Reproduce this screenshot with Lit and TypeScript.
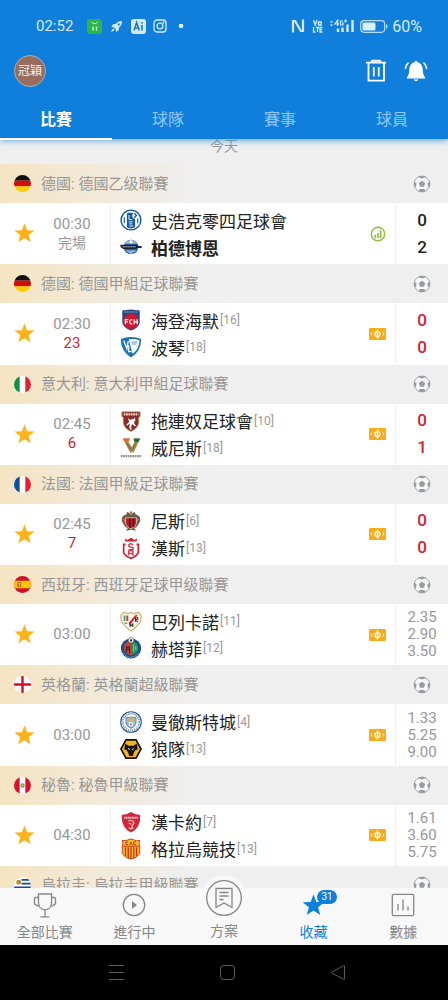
import { LitElement, html, css, svg, nothing } from "lit";
import { customElement, property, state } from "lit/decorators.js";
import { classMap } from "lit/directives/class-map.js";

interface Team {
  name: string;
  crest: string;
  rank?: number;
  winner?: boolean;
}

interface League {
  country: string;
  title: string;
  flag: string;
  time?: string;
  status?: string;
  live?: boolean;
  teams?: Team[];
  figures?: string[];
  kind?: "final" | "live" | "odds";
}

const leagues: League[] = [
  {
    country: "德國", title: "德國乙级聯賽", flag: "de", time: "00:30", status: "完場", kind: "final",
    teams: [{ name: "史浩克零四足球會", crest: "schalke" }, { name: "柏德博恩", crest: "paderborn", winner: true }],
    figures: ["0", "2"],
  },
  {
    country: "德國", title: "德國甲組足球聯賽", flag: "de", time: "02:30", status: "23", live: true, kind: "live",
    teams: [{ name: "海登海默", crest: "heidenheim", rank: 16 }, { name: "波琴", crest: "bochum", rank: 18 }],
    figures: ["0", "0"],
  },
  {
    country: "意大利", title: "意大利甲組足球聯賽", flag: "it", time: "02:45", status: "6", live: true, kind: "live",
    teams: [{ name: "拖連奴足球會", crest: "torino", rank: 10 }, { name: "威尼斯", crest: "venezia", rank: 18 }],
    figures: ["0", "1"],
  },
  {
    country: "法國", title: "法國甲級足球聯賽", flag: "fr", time: "02:45", status: "7", live: true, kind: "live",
    teams: [{ name: "尼斯", crest: "nice", rank: 6 }, { name: "漢斯", crest: "reims", rank: 13 }],
    figures: ["0", "0"],
  },
  {
    country: "西班牙", title: "西班牙足球甲级聯賽", flag: "es", time: "03:00", kind: "odds",
    teams: [{ name: "巴列卡諾", crest: "rayo", rank: 11 }, { name: "赫塔菲", crest: "getafe", rank: 12 }],
    figures: ["2.35", "2.90", "3.50"],
  },
  {
    country: "英格蘭", title: "英格蘭超級聯賽", flag: "en", time: "03:00", kind: "odds",
    teams: [{ name: "曼徹斯特城", crest: "city", rank: 4 }, { name: "狼隊", crest: "wolves", rank: 13 }],
    figures: ["1.33", "5.25", "9.00"],
  },
  {
    country: "秘魯", title: "秘魯甲級聯賽", flag: "pe", time: "04:30", kind: "odds",
    teams: [{ name: "漢卡約", crest: "huancayo", rank: 7 }, { name: "格拉烏競技", crest: "grau", rank: 13 }],
    figures: ["1.61", "3.60", "5.75"],
  },
  { country: "烏拉圭", title: "烏拉圭甲級聯賽", flag: "uy" },
];

const flags: Record<string, unknown> = {
  de: svg`<rect width="18" height="6" fill="#111"/><rect y="6" width="18" height="6" fill="#d80a0a"/><rect y="12" width="18" height="6" fill="#fc0"/>`,
  it: svg`<rect width="18" height="18" fill="#fff"/><rect width="6" height="18" fill="#109246"/><rect x="12" width="6" height="18" fill="#e3202f"/>`,
  fr: svg`<rect width="18" height="18" fill="#fff"/><rect width="6" height="18" fill="#0a4fa8"/><rect x="12" width="6" height="18" fill="#f01c2c"/>`,
  es: svg`<rect width="18" height="18" fill="#d3122a"/><rect y="5" width="18" height="8" fill="#fdc401"/><rect x="3.500" y="6.500" width="4" height="5" rx="1" fill="#c4602c"/><rect x="5" y="7.500" width="1.500" height="2.500" fill="#efd3b0"/>`,
  en: svg`<rect width="18" height="18" fill="#fff"/><path d="M7.700 0h2.600v18H7.700zM0 7.700h18v2.600H0z" fill="#cf112d"/>`,
  pe: svg`<rect width="18" height="18" fill="#fff"/><rect width="6" height="18" fill="#d8102a"/><rect x="12" width="6" height="18" fill="#d8102a"/><circle cx="9" cy="9" r="2.300" fill="#6b9a55"/><circle cx="9" cy="9" r="1" fill="#d9cf8a"/>`,
  uy: svg`<rect width="18" height="18" fill="#fff"/><path d="M8 2h10v2H8zM8 6h10v2H8zM0 10h18v2H0zM0 14h18v2H0z" fill="#1746a5"/><circle cx="5" cy="5.500" r="2.600" fill="#b98a2f"/>`,
};

const crests: Record<string, unknown> = {
  schalke: svg`<circle cx="12" cy="12" r="10.800" fill="#fff" stroke="#10589f" stroke-width="1.500"/><path d="M7.500 11V6q0-2 2-2H15l-1.500 1.500V9l3 2.500V20q-4 2-8 .5L7.500 19z" fill="#10589f"/><path d="M15.500 4.500 18 7l-2.500 2.500" fill="none" stroke="#10589f" stroke-width="1.500"/><path d="M9.800 6.500v5h3.500M9.500 14h4.500M10 16.200h3.500M10 18.500h4.500" fill="none" stroke="#fff" stroke-width="1"/><path d="M4.700 9v6.500M19.300 10v5.500" stroke="#10589f" stroke-width="1.200"/>`,
  paderborn: svg`<circle cx="12" cy="12" r="8" fill="#2a63a8"/><path d="M5 8.500a8 8 0 0 1 14 0z" fill="#9db4cf"/><rect x="10.500" y="5" width="3" height="3" fill="#fff"/><path d="M.5 9.500h19v1.300h4v2.400h-5l-1.500 1H3.500L.5 12z" fill="#1a2232"/><path d="M3 11.800h14" stroke="#c9d3de" stroke-width="1.100" stroke-dasharray="1.300 .5"/><path d="M7 16.500h10M9.500 18.500h5" stroke="#e8eef6" stroke-width="1"/>`,
  heidenheim: svg`<path d="M2.500 1.500 12 .5l9.500 1V15q-1.500 6-9.500 8.500Q4 21 2.500 15z" fill="#254a83"/><path d="M5 3.200h14" stroke="#9ab1d0" stroke-width="1.200" stroke-dasharray="1.500 .6"/><circle cx="12" cy="13.500" r="8.300" fill="#d8152e"/><path d="M5.800 16.500v-5h3.300M5.800 14h2.800M13.500 12q-2.800-1.300-2.800 2t2.800 2M15.500 11.300v5.200M18.800 11.300v5.200M15.500 14h3.300" fill="none" stroke="#fff" stroke-width="1.300"/>`,
  bochum: svg`<path d="M1 3.200q11-4 22 0 .5 13-11 20.300Q.5 16 1 3.200z" fill="#1c71b5"/><path d="M9.500 3.500q6-.8 11.800 1-.2 9.500-7.500 15z" fill="#f4f8fb"/><path d="M12.500 6.700h6.500M13 8.700h5" stroke="#4a8cc3" stroke-width=".9"/><path d="m4 5 3.500 9L9 5.500M9.500 10v7h3.500" fill="none" stroke="#fff" stroke-width="1.400"/>`,
  torino: svg`<path d="M2 2h20v5l-1.500 1v6q-1 6-8.500 9.500Q4.500 20 3.500 14V8L2 7z" fill="#8a2a2a" stroke="#c59a5a" stroke-width=".8"/><path d="M4 4.800h16" stroke="#f3dfcf" stroke-width="2.400" stroke-dasharray="1.900 .7"/><path d="m8.500 8.500 2 2 4-.8 1.500-1.400 1 3-1.500 1.500v2l2 2.500-1.700.4-2.600-2.500-1.200 3.500 1 2-1.500 1-1.500-3 1-4-3.500 2.500-.5-1.500 3-2.500z" fill="#fff"/>`,
  venezia: svg`<path d="M3 1.500h7.500L9 5l4 6 3-6-1.500-3.500H22L15 17h-4z" fill="#b6894c"/><path d="M3.500 1.500H11L9.800 5H5.300z" fill="#e66b2e"/><path d="M14.800 1.500H22L20 5.500h-4z" fill="#1f6b45"/><path d="m7.500 6.500 4.500 8M17.500 6.500 13.500 14" stroke="#4d7a55" stroke-width="1.200"/><path d="M1 20.800h22" stroke="#9a9185" stroke-width="2.400" stroke-dasharray="1.900 .6"/>`,
  nice: svg`<path d="M12 1q1.600.8 1 3 2-2 3.500-1.500L17 5q4 .5 5 4 .6 3-1.500 6-2 4-5 5l2 2.500-5.500-1-5.500 1 2-2.500q-3-1-5-5Q1.400 12 2 9q1-3.500 5-4l.5-2.500Q9 2 11 4q-.6-2.200 1-3z" fill="#6b5a42"/><path d="M6 8.500h12v6q-1 4.500-6 6-5-1.500-6-6z" fill="#c4162e" stroke="#e8dccc" stroke-width=".8"/><path d="M10 9h1.500v10.500L10 19zM14 9h1.500v9L14 19z" fill="#1d1d1d"/><circle cx="12" cy="4" r="1" fill="#d6b169"/><path d="M3.500 10q1.500 0 2 3M20.500 10q-1.500 0-2 3" stroke="#c5a46b" fill="none"/>`,
  reims: svg`<path d="m6 5-.8-3.500 3 1.800L12 .7l3.800 2.600 3-1.800L18 5z" fill="#d8182d"/><path d="M6 8H4v9q1.500 4 8 6.300Q18.500 21 20 17V8h-2" fill="none" stroke="#d8182d" stroke-width="1.800"/><path d="M14.500 8q-5-1.500-5 1.300 0 1.700 2.500 1.700t2.500 1.800q0 2-5 .8M9.500 20v-5H13q1.500 0 1.500 1.300T13 17.700H9.500M12.500 17.700l2.500 2.500" fill="none" stroke="#d8182d" stroke-width="1.300"/>`,
  rayo: svg`<path d="M4 2.500 9 4l3-1.500L15 4l5-1.500 3 3.500q.5 6-2.500 9-3 4-8.500 8-5.500-4-8.500-8Q.5 12 1 6z" fill="#fbf6e8" stroke="#bfa95b" stroke-width="1.200"/><path d="M4 6h2v6H4z" fill="#48996d"/><path d="M7 6h2v6H7z" fill="#c63a36"/><path d="m9.500 14 8-9 1.500 1-8.500 11z" fill="#d82b2e"/><path d="M17 13V8.500h2.500V10L17 10.800l2.700 2.200M11 18.500v-3.300l1.500 2 1.500-2v3.300" fill="none" stroke="#2e2e2e" stroke-width="1.100"/><path d="M5 14.500h3" stroke="#48996d" stroke-width="1.300"/>`,
  getafe: svg`<circle cx="12" cy="12.500" r="11" fill="#1a4c93"/><circle cx="12" cy="12" r="7.800" fill="#cf412d"/><path d="M12.500 4.500a7.500 7.500 0 0 1 0 15z" fill="#24905a"/><path d="M7 17v-6h3.500v7M7 13.500h3.500" stroke="#1d2d49" stroke-width="1.200" fill="none"/><path d="M15 8v8M17.300 10v4" stroke="#aad08e" stroke-width="1"/><circle cx="12" cy="3.600" r="3" fill="#fff" stroke="#333" stroke-width=".6"/><path d="m12 2.300 1.300 1-.5 1.500h-1.600l-.5-1.500z" fill="#222"/><path d="M3.800 17q3 5 8.200 5t8.200-5" fill="none" stroke="#9fbbe0" stroke-width="1" stroke-dasharray="1.500 1"/>`,
  city: svg`<circle cx="12" cy="12" r="11.200" fill="#fff" stroke="#31547c" stroke-width="1.200"/><circle cx="12" cy="12" r="9" fill="none" stroke="#6f9ac4" stroke-width="1.800" stroke-dasharray="1.400 .9"/><path d="M6.500 7h11v6q-1 4-5.500 6-4.500-2-5.500-6z" fill="#8ec1e8" stroke="#2c5686" stroke-width=".7"/><path d="M8 10h8" stroke="#e5b84a" stroke-width="1.400"/><circle cx="12" cy="14.500" r="2.400" fill="#fff"/><circle cx="12" cy="14.500" r="1.200" fill="#d15158"/><path d="M10.500 9h3V6h-3z" fill="#d8a53c"/>`,
  wolves: svg`<path d="M6.500 2h11L23 12l-5.500 10h-11L1 12z" fill="#f6b222" stroke="#15100a" stroke-width="1.800"/><path d="m5.500 6 3.800 2.500h5.400L18.500 6l.8 6.500-2.300.5-2 3-1 3.500h-4L9 16l-2-3-2.300-.5z" fill="#161414"/><path d="m8.700 11.500 2 1M15.300 11.500l-2 1" stroke="#fff" stroke-width="1"/>`,
  huancayo: svg`<path d="M2 4q5 .5 10-3 5 3.500 10 3 1 14-10 19.500Q1 18 2 4z" fill="#d4263b"/><path d="M4.500 7.300h15" stroke="#f7c8cd" stroke-width="2.200" stroke-dasharray="1.500 .5"/><path d="M9 11q3-1.500 5.500.5 1.500 2.500-1 4-1.500 1.500.5 3-2.500 2-4.500-.5M9.500 13.500l3 .5" fill="none" stroke="#f6c5a8" stroke-width="1.300"/>`,
  grau: svg`<path d="M2.500 2.500 6 3l6-2 6 2 3.500-.5Q20 6 21.500 9v8q-3 5-9.500 6-6.500-1-9.500-6V9Q4 6 2.500 2.500z" fill="#f9c51c" stroke="#cc2a1c" stroke-width="1"/><path d="M6 10v10M9 10v12M12 10v12.500M15 10v12M18 10v10" stroke="#d92f1d" stroke-width="1.500"/><path d="M3 9h18" stroke="#cc2a1c" stroke-width="1"/><path d="M9 4.300H6.500v3H9M10.700 7.800l1.300-3.600 1.300 3.600M17.300 4.300h-2.500v3h2.500V6" fill="none" stroke="#b3301c" stroke-width="1"/>`,
};

const starPath = "M12 1.300l2.700 7.300 7.800.3-6.100 4.800 2.100 7.500L12 16.900l-6.500 4.300 2.100-7.500L1.500 8.900l7.800-.3z";

@customElement("league-group")
export class LeagueGroup extends LitElement {
  @property({ attribute: false }) league!: League;
  @state() private starred = true;

  static styles = css`
    :host { display: flex; flex-direction: column; overflow: hidden; background: #fff; }
    svg { display: block; }
    .league {
      flex: 0 0 39px;
      display: grid;
      grid-template-columns: 41px 1fr 52px;
      align-items: center;
      background: linear-gradient(90deg, #f5e4c2 0, #efefef 192px);
      color: #979797;
    }
    .flag { width: 17px; height: 17px; margin-left: 14px; border-radius: 50%; overflow: hidden; }
    .title { margin: 0; font-size: 15px; font-weight: 400; line-height: 20px; white-space: nowrap; }
    .ball { justify-self: center; }
    .match { flex: 1; display: grid; grid-template-columns: 111px 1fr 35px 53px; }
    .when { display: grid; grid-template-columns: 48px 48px; align-items: center; border-right: 1px solid #f0f0f0; }
    .star { display: grid; place-items: center; padding: 0; border: 0; background: none; color: #ffb31a; cursor: pointer; }
    .star[aria-pressed="false"] { color: #ccc; }
    .clock { text-align: center; font-size: 15px; line-height: 19px; color: #979797; }
    .status { font-size: 14px; }
    .live { font-size: 15px; color: #d01f35; }
    .teams { display: flex; flex-direction: column; justify-content: center; padding-left: 9px; min-width: 0; }
    .team { display: flex; align-items: center; height: 27px; font-size: 17px; color: #222; white-space: nowrap; }
    .team svg { margin-right: 9px; }
    .winner { font-weight: 700; }
    .rank { margin-left: 1px; font-size: 12px; font-weight: 400; color: #999; }
    .mark { display: grid; place-items: center; }
    .figures {
      display: flex; flex-direction: column; justify-content: center; text-align: center;
      border-left: 1px solid #f0f0f0;
      font-size: 17px; line-height: 27px; font-weight: 500; color: #222;
    }
    .figures.hot { color: #d01f35; }
    .figures.odds { font-size: 15px; line-height: 17px; font-weight: 400; color: #979797; }
  `;

  private ball() {
    return html`<svg class="ball" width="18" height="18" viewBox="0 0 18 18" aria-hidden="true">
      <circle cx="9" cy="9" r="7.900" fill="#f7f7f7" stroke="#a3a5a9" stroke-width="1"/>
      <path d="m9 5.800 3.200 2.300-1.200 3.700H7L5.800 8.100z" fill="#989ba0"/>
      <path d="M5 2 9 3.400 13 2l-1.700-.9H6.700zM1 6.500l2.500 1.500-.4 4-2-.7zM17 6.500 14.500 8l.4 4 2-.7zM6.600 14h4.800l.8 2.300-3.200.9-3.200-.9z" fill="#989ba0"/>
    </svg>`;
  }

  private mark(kind?: string) {
    return kind === "final"
      ? html`<svg width="16" height="16" viewBox="0 0 16 16" role="img" aria-label="統計">
          <circle cx="8" cy="8" r="6.700" fill="#fff" stroke="#8bc334" stroke-width="1.400"/>
          <path d="M4.500 8.800h1.700V12H4.500zM7.100 7h1.700v5H7.100zM9.700 4.500h1.800V12H9.700z" fill="#8bc334"/>
        </svg>`
      : html`<svg width="17" height="12" viewBox="0 0 17 12" role="img" aria-label="賠率">
          <rect width="17" height="12" rx="1" fill="#f9ac1b"/>
          <path d="M8.500 1.500v9" stroke="#fff" stroke-width="1.400"/>
          <ellipse cx="8.500" cy="6" rx="2.600" ry="2.500" fill="none" stroke="#fff" stroke-width="1.200"/>
          <path d="m3 4.500-1 1.500 1 1.500M14 4.500l1 1.500-1 1.500" fill="none" stroke="#fff" stroke-width="1"/>
        </svg>`;
  }

  render() {
    const { country, title, flag, time, status, live, teams, figures, kind } = this.league;
    return html`
      <header class="league">
        <svg class="flag" viewBox="0 0 18 18" aria-hidden="true">${flags[flag]}</svg>
        <h2 class="title">${country}: ${title}</h2>
        ${this.ball()}
      </header>
      ${teams
        ? html`<div class="match">
            <div class="when">
              <button class="star" aria-label="收藏" aria-pressed=${this.starred ? "true" : "false"}
                @click=${() => (this.starred = !this.starred)}>
                <svg width="23" height="23" viewBox="0 0 24 24"><path d=${starPath} fill="currentColor"/></svg>
              </button>
              <div class="clock">
                <div>${time}</div>
                ${status ? html`<div class=${classMap({ status: !live, live: !!live })}>${status}</div>` : nothing}
              </div>
            </div>
            <div class="teams">
              ${teams.map((t) => html`<div class=${classMap({ team: true, winner: !!t.winner })}>
                <svg width="22" height="22" viewBox="0 0 24 24" aria-hidden="true">${crests[t.crest]}</svg>
                <span>${t.name}</span>${t.rank ? html`<span class="rank">[${t.rank}]</span>` : nothing}
              </div>`)}
            </div>
            <div class="mark">${this.mark(kind)}</div>
            <div class=${classMap({ figures: true, hot: kind === "live", odds: kind === "odds" })}>
              ${figures!.map((f) => html`<span>${f}</span>`)}
            </div>
          </div>`
        : nothing}
    `;
  }
}

@customElement("app-root")
export class AppRoot extends LitElement {
  @state() private tab = "比賽";
  @state() private section = "收藏";

  static styles = css`
    :host {
      display: flex; flex-direction: column; height: 100vh; overflow: hidden;
      background: #efefef;
      font-family: Roboto, "Noto Sans CJK TC", sans-serif;
    }
    svg { display: block; }
    button { font: inherit; color: inherit; padding: 0; border: 0; background: none; cursor: pointer; }
    .top { flex: none; position: relative; z-index: 1; background: #107fdc; color: #fff; box-shadow: 0 2px 6px #107fdc99; }
    .status { display: flex; align-items: center; justify-content: space-between; height: 36px; padding: 8px 26px 0 36px; color: #d5ebfc; }
    .side { display: flex; align-items: center; }
    .time { font-size: 15px; }
    .left { gap: 7px; }
    .left .time { margin-right: 7px; }
    .right { gap: 5px; }
    .percent { font-size: 16px; margin-left: -1px; }
    .bar { display: flex; align-items: center; justify-content: space-between; height: 54px; padding: 0 19px 0 14px; }
    .avatar {
      display: grid; place-items: center; box-sizing: border-box; width: 32px; height: 32px;
      border: 1px solid #9bb2c8; border-radius: 50%; background: #9a6c5c; color: #f4eeea; font-size: 12px; line-height: 16px;
      white-space: nowrap;
    }
    .actions { display: flex; gap: 15px; }
    .tabs { display: grid; grid-template-columns: repeat(4, 1fr); height: 41px; }
    .tab { position: relative; padding-top: 2px; font-size: 16px; line-height: 24px; color: #8fc8f5; }
    .tab[aria-selected="true"] { color: #fff; font-weight: 700; }
    .tab[aria-selected="true"]::after { content: ""; position: absolute; left: 0; right: 0; bottom: -1px; height: 2px; background: #fff; }
    .list { flex: 1; min-height: 0; display: flex; flex-direction: column; overflow: hidden; }
    .day { flex: 0 0 25px; margin: 0; text-align: center; font-size: 14px; font-weight: 400; line-height: 14px; color: #999; }
    league-group { flex: 1 0 100px; }
    .peek { flex: 0 0 22px; }
    .nav { flex: none; position: relative; display: grid; grid-template-columns: repeat(5, 1fr); height: 57px; background: #f8f8f8; color: #868686; }
    .item { display: grid; grid-template-rows: 34px 21px; justify-items: center; align-items: center; align-content: start; font-size: 14px; line-height: 21px; }
    .item.on { color: #107fdc; }
    .item.plan { grid-template-rows: 33px 21px; align-items: end; }
    .icon { position: relative; }
    .disc { display: grid; place-items: center; width: 46px; height: 46px; border-radius: 50%; background: #f8f8f8; }
    .badge {
      position: absolute; left: 16px; top: -3px; width: 20px; border-radius: 8px;
      background: #107fdc; color: #fff; font-size: 10px; line-height: 14px; text-align: center;
    }
    .system { flex: none; display: flex; justify-content: center; align-items: center; gap: 94px; height: 55px; padding-left: 6px; background: #000; color: #5c5c5c; }
  `;

  private statusBar() {
    return html`<div class="status">
      <div class="side left">
        <span class="time">02:52</span>
        <svg width="15" height="15" viewBox="0 0 15 15" aria-hidden="true">
          <rect width="15" height="15" rx="3" fill="#2cb54a"/>
          <path d="M4.500 3q3 3.400 6 0" fill="none" stroke="#d9f5dc" stroke-width="1"/>
          <path d="M5 8.500h2M6 7.500v4.500M8.500 8h2M8.500 10h2M9.500 8v4M5 10.500h2" stroke="#d9f5dc" stroke-width=".8"/>
        </svg>
        <svg width="15" height="15" viewBox="0 0 15 15" fill="#d5ebfc" aria-hidden="true">
          <path d="M13 2Q9 2 6.700 5L4 5.300 2.300 8l2.500.3 2 2 .3 2.600 2.500-1.700L10 8.500Q13 6 13 2zM9.700 4.300a1.100 1.100 0 1 1 0 2.200 1.100 1.100 0 0 1 0-2.200z" fill-rule="evenodd"/>
          <path d="M4.500 9.500q-2 .3-2.300 3.300 3-.3 3.400-2.200z"/>
        </svg>
        <svg width="15" height="15" viewBox="0 0 15 15" aria-hidden="true">
          <rect width="15" height="15" rx="3" fill="#d5ebfc"/>
          <path d="m3 11.500 2.600-8 2.600 8M4 9h3.300M11 6v5.500M11 3v1.600" fill="none" stroke="#1b78c9" stroke-width="1.600"/>
        </svg>
        <svg width="14" height="14" viewBox="0 0 14 14" fill="none" stroke="#d5ebfc" stroke-width="1.300" aria-hidden="true">
          <rect x="1" y="1" width="12" height="12" rx="3"/><circle cx="7" cy="7" r="2.900"/><circle cx="10.500" cy="3.500" r=".4"/>
        </svg>
        <svg width="14" height="14" viewBox="0 0 14 14" aria-hidden="true"><circle cx="7" cy="7" r="2.300" fill="#e6f4fe"/></svg>
      </div>
      <div class="side right">
        <svg width="14" height="14" viewBox="0 0 14 14" fill="none" stroke="#d5ebfc" stroke-width="2.200" aria-hidden="true">
          <path d="M2 13.500V2h2.200L9 10.500M12 .5V12H9.800L5 3.500"/>
        </svg>
        <svg width="14" height="14" viewBox="0 0 14 14" fill="none" stroke="#d5ebfc" stroke-width="1.300" aria-hidden="true">
          <path d="m3.500 1 1.700 5L7 1M8.500 3h2.700v3H8.500zM3.500 8v5h2M6 8.500h3M7.500 8.500V13M12.500 8.500H10V13h2.500M10 10.700h2.200"/>
        </svg>
        <svg width="26" height="14" viewBox="0 0 26 14" fill="none" stroke="#d5ebfc" aria-hidden="true">
          <path d="m1 3.500 1.500-2L4 3.500zM1 5.500l1.500 2L4 5.500z" fill="#d5ebfc" stroke="none"/>
          <path d="M8.700 7V1L6 5h4M14 2h-2.500v4H14V4h-1M15 2h3M16.500.5v3" stroke-width="1.200"/>
          <path d="M9 9.500V13M13.500 8.500V13M18.500 5.500V13M23.500 1v12" stroke-width="2.400"/>
        </svg>
        <svg width="28" height="13" viewBox="0 0 28 13" aria-hidden="true">
          <rect x=".7" y=".7" width="24" height="11.600" rx="3.500" fill="none" stroke="#b7dcf8" stroke-width="1.200"/>
          <rect x="2.500" y="2.500" width="13" height="8" rx="1.500" fill="#d9f0fd"/><path d="M26.700 4.500v4" stroke="#b7dcf8" stroke-width="1.300"/>
        </svg>
        <span class="percent">60%</span>
      </div>
    </div>`;
  }

  private navIcon(name: string) {
    switch (name) {
      case "全部比賽":
        return html`<svg width="26" height="26" viewBox="0 0 26 26" fill="none" stroke="currentColor" stroke-width="1.300">
          <path d="M6.500 2h13v9.500q-.6 6-6.500 6.300-5.900-.3-6.500-6.300zM6.500 5.500h-3l-1 .9v5.500l3 2h2M19.500 5.500h3l1 .9v5.500l-3 2h-2M13 17.800v7M8.500 24.800h9"/></svg>`;
      case "進行中":
        return html`<svg width="24" height="24" viewBox="0 0 24 24"><circle cx="12" cy="12" r="10.700" fill="none" stroke="currentColor" stroke-width="1.300"/><path d="m10 8 5 4-5 4z" fill="currentColor"/></svg>`;
      case "方案":
        return html`<span class="disc"><svg width="38" height="38" viewBox="0 0 38 38" fill="none" stroke="currentColor" stroke-width="1.300">
          <circle cx="19" cy="19" r="17.300"/><path d="M11 9.500h16v19l-8-4.500-8 4.500zM14.500 13.500h9M14.500 17h9M14.500 20.500h4"/></svg></span>`;
      case "收藏":
        return html`<svg width="25" height="25" viewBox="0 0 24 24"><path d=${starPath} fill="currentColor"/></svg><span class="badge">31</span>`;
      default:
        return html`<svg width="24" height="24" viewBox="0 0 24 24" fill="none" stroke="currentColor" stroke-width="1.300">
          <rect x="1.300" y="1.300" width="21.400" height="21.400" rx="1.500"/><path d="M7 11v6.500M12 6.500v11M17 13.500v4"/></svg>`;
    }
  }

  render() {
    return html`
      <header class="top">
        ${this.statusBar()}
        <div class="bar">
          <button class="avatar">冠穎</button>
          <div class="actions">
            <button aria-label="刪除"><svg width="24" height="24" viewBox="0 0 24 24" fill="none" stroke="#fff" stroke-width="1.800">
              <path d="M2 3.700h20M7.500 2.700q0-1 1-1h7q1 0 1 1M4.500 4v17.600h15.500V4M9.800 8v9.500M14.700 8v9.500"/></svg></button>
            <button aria-label="通知"><svg width="26" height="24" viewBox="0 0 26 24" fill="#fff">
              <path d="M13 1.800q1.300 0 1.500 1.500 4.700 1.200 5.200 6.700.2 6 2.300 8.300v1.200H4v-1.200Q6.100 16 6.300 10q.5-5.500 5.200-6.700.2-1.500 1.500-1.500zM10.800 20.500h4.400q-.5 1.800-2.200 1.800t-2.200-1.800z"/>
              <path d="M5.500 3.500Q2.800 6 2.300 10M20.500 3.500Q23.200 6 23.700 10" fill="none" stroke="#fff" stroke-width="1.700"/></svg></button>
          </div>
        </div>
        <div class="tabs" role="tablist">
          ${["比賽", "球隊", "賽事", "球員"].map((t) => html`<button class="tab" role="tab"
            aria-selected=${this.tab === t ? "true" : "false"} @click=${() => (this.tab = t)}>${t}</button>`)}
        </div>
      </header>
      <main class="list">
        <h1 class="day">今天</h1>
        ${leagues.map((l) => html`<league-group class=${classMap({ peek: !l.teams })} .league=${l}></league-group>`)}
      </main>
      <nav class="nav">
        ${["全部比賽", "進行中", "方案", "收藏", "數據"].map((n) => html`<button
          class=${classMap({ item: true, plan: n === "方案", on: this.section === n })}
          @click=${() => (this.section = n)}><span class="icon">${this.navIcon(n)}</span><span>${n}</span></button>`)}
      </nav>
      <footer class="system">
        <svg width="17" height="17" viewBox="0 0 17 17" stroke="currentColor"><path d="M1 1.500h15M1 8.500h15M1 15.500h15"/></svg>
        <svg width="17" height="17" viewBox="0 0 17 17" fill="none" stroke="currentColor"><rect x="1.500" y="1.500" width="14" height="14" rx="3"/></svg>
        <svg width="17" height="17" viewBox="0 0 17 17" fill="none" stroke="currentColor"><path d="M14.500 2v13q0 .8-1 .3L2 9q-.8-.5 0-1l11.500-6.300q1-.5 1 .3z"/></svg>
      </footer>
    `;
  }
}
